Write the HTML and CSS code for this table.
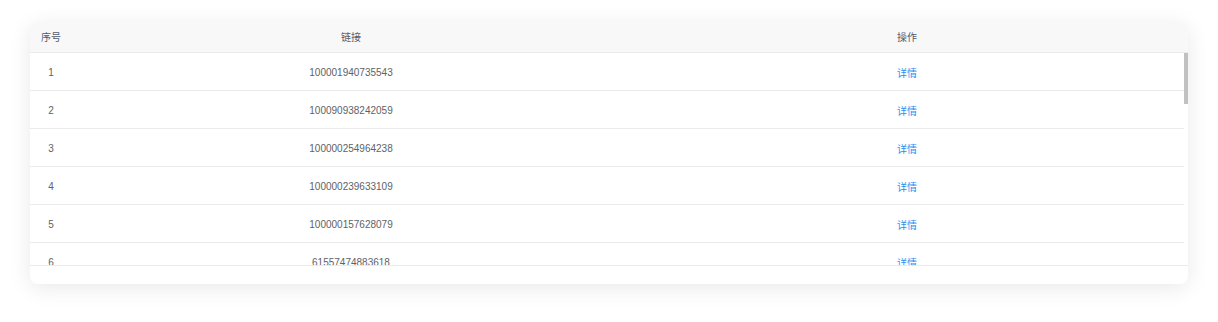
FILE: index.html
```html
<!DOCTYPE html>
<html lang="zh">
<head>
<meta charset="utf-8">
<link rel="stylesheet" href="styles.css">
</head>
<body>
<div class="card">
  <div class="thead">
    <div class="th">序号</div>
    <div class="th">链接</div>
    <div class="th">操作</div>
    <div class="gutter"></div>
  </div>
  <div class="body-wrap">
    <div class="tbody">
      <div class="tr"><div class="td">1</div><div class="td">100001940735543</div><div class="td"><a class="link">详情</a></div></div>
      <div class="tr"><div class="td">2</div><div class="td">100090938242059</div><div class="td"><a class="link">详情</a></div></div>
      <div class="tr"><div class="td">3</div><div class="td">100000254964238</div><div class="td"><a class="link">详情</a></div></div>
      <div class="tr"><div class="td">4</div><div class="td">100000239633109</div><div class="td"><a class="link">详情</a></div></div>
      <div class="tr"><div class="td">5</div><div class="td">100000157628079</div><div class="td"><a class="link">详情</a></div></div>
      <div class="tr"><div class="td">6</div><div class="td">61557474883618</div><div class="td"><a class="link">详情</a></div></div>
      <div class="tr"><div class="td">7</div><div class="td">100004512873064</div><div class="td"><a class="link">详情</a></div></div>
      <div class="tr"><div class="td">8</div><div class="td">100083619425537</div><div class="td"><a class="link">详情</a></div></div>
      <div class="tr"><div class="td">9</div><div class="td">100002768314920</div><div class="td"><a class="link">详情</a></div></div>
      <div class="tr"><div class="td">10</div><div class="td">61553028417765</div><div class="td"><a class="link">详情</a></div></div>
      <div class="tr"><div class="td">11</div><div class="td">100007321986451</div><div class="td"><a class="link">详情</a></div></div>
      <div class="tr"><div class="td">12</div><div class="td">100091245873306</div><div class="td"><a class="link">详情</a></div></div>
      <div class="tr"><div class="td">13</div><div class="td">100000873154629</div><div class="td"><a class="link">详情</a></div></div>
      <div class="tr"><div class="td">14</div><div class="td">100006198247730</div><div class="td"><a class="link">详情</a></div></div>
      <div class="tr"><div class="td">15</div><div class="td">61556914302287</div><div class="td"><a class="link">详情</a></div></div>
      <div class="tr"><div class="td">16</div><div class="td">100003475619842</div><div class="td"><a class="link">详情</a></div></div>
      <div class="tr"><div class="td">17</div><div class="td">100087162534091</div><div class="td"><a class="link">详情</a></div></div>
      <div class="tr"><div class="td">18</div><div class="td">100001628903457</div><div class="td"><a class="link">详情</a></div></div>
      <div class="tr"><div class="td">19</div><div class="td">100009354172806</div><div class="td"><a class="link">详情</a></div></div>
      <div class="tr"><div class="td">20</div><div class="td">61558203761944</div><div class="td"><a class="link">详情</a></div></div>
      <div class="tr"><div class="td">21</div><div class="td">100002917468350</div><div class="td"><a class="link">详情</a></div></div>
      <div class="tr"><div class="td">22</div><div class="td">100094386125713</div><div class="td"><a class="link">详情</a></div></div>
      <div class="tr"><div class="td">23</div><div class="td">100005741239068</div><div class="td"><a class="link">详情</a></div></div>
    </div>
    <div class="thumb"></div>
  </div>
</div>
</body>
</html>
```
FILE: styles.css
```css
* { box-sizing: border-box; }
html, body { margin: 0; padding: 0; background: #ffffff; }
body {
  font-family: "Liberation Sans", Arial, "Noto Sans CJK SC", sans-serif;
  font-size: 10px;
  color: #606266;
  padding: 22px 30px 0 30px;
  min-height: 322px;
}
.card {
  width: 1158px;
  height: 262px;
  background: #ffffff;
  border-radius: 8px;
  overflow: hidden;
  box-shadow: 0 4px 22px rgba(0, 0, 0, 0.09);
  padding-bottom: 18px;
}
.thead {
  display: grid;
  grid-template-columns: 42px 558px 1fr 4px;
  height: 31px;
  background: #f8f8f9;
  border-bottom: 1px solid #e8eaec;
  padding-bottom: 1px;
}
.th {
  display: flex;
  align-items: center;
  justify-content: center;
  color: #515a6e;
  font-size: 10px;
}
.body-wrap {
  position: relative;
  height: 213px;
  border-bottom: 1px solid #e8eaec;
}
.tbody {
  height: 212px;
  overflow-y: scroll;
  scrollbar-width: none;
}
.tbody::-webkit-scrollbar { display: none; }
.thumb {
  position: absolute;
  top: 0;
  right: 0;
  width: 4px;
  height: 51px;
  background: #c1c1c1;
}
.tr {
  display: grid;
  grid-template-columns: 42px 558px 1fr;
  height: 38px;
  margin-right: 4px;
  border-bottom: 1px solid #e8eaec;
  padding-top: 2px;
}
.td {
  display: flex;
  align-items: center;
  justify-content: center;
  color: #606266;
}
.link {
  color: #2d8cf0;
  cursor: pointer;
}
```
